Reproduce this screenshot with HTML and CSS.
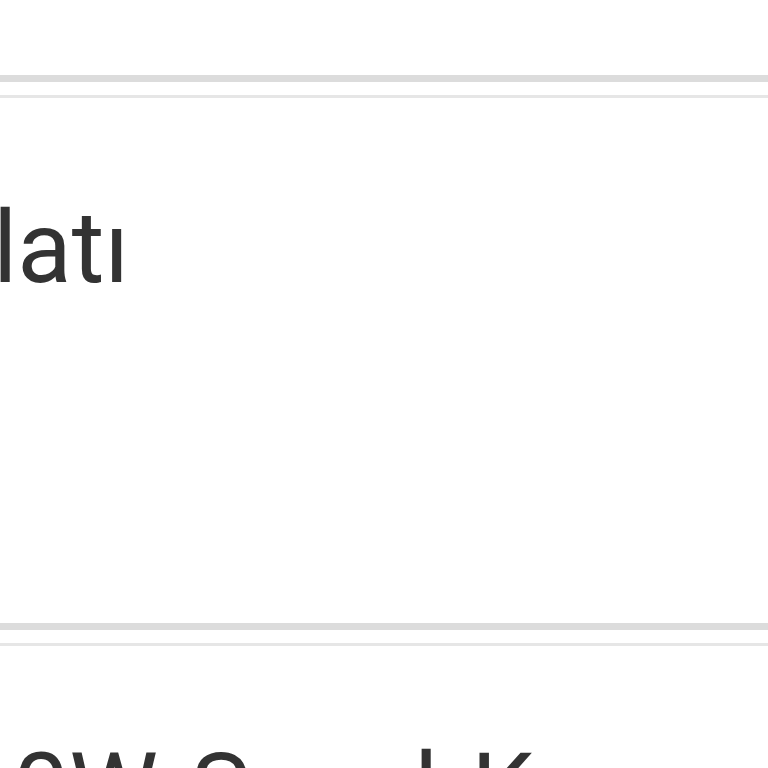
FILE: index.html
```html
<!DOCTYPE html>
<html lang="tr">
<head>
<meta charset="utf-8">
<link rel="stylesheet" href="styles.css">
</head>
<body>
<div class="page">
  <div class="top-space"></div>
  <div class="divider"></div>
  <section class="panel">
    <p class="panel-text">latı</p>
  </section>
  <div class="divider"></div>
  <section class="next">
    <h2 class="next-title">0W Sanal Kasa</h2>
  </section>
</div>
</body>
</html>
```
FILE: styles.css
```css
html, body {
  margin: 0;
  padding: 0;
  background: #ffffff;
  overflow: hidden;
}
.page {
  width: 768px;
  height: 768px;
  overflow: hidden;
  font-family: Roboto, "Liberation Sans", sans-serif;
  color: #333333;
}
.top-space {
  height: 75px;
}
.divider {
  height: 13px;
  border-top: 7px solid #dcdcdc;
  border-bottom: 3px solid #e6e6e6;
}
.panel {
  height: 525px;
  overflow: hidden;
}
.panel-text {
  margin: 0;
  padding-top: 94px;
  margin-left: -7px;
  font-size: 100px;
  line-height: 112px;
  white-space: nowrap;
}
.next {
  height: 123px;
  overflow: hidden;
}
.next-title {
  margin: 0;
  padding-top: 94px;
  margin-left: 13px;
  font-size: 100px;
  font-weight: 400;
  line-height: 100px;
  word-spacing: 8px;
  white-space: nowrap;
}
```
